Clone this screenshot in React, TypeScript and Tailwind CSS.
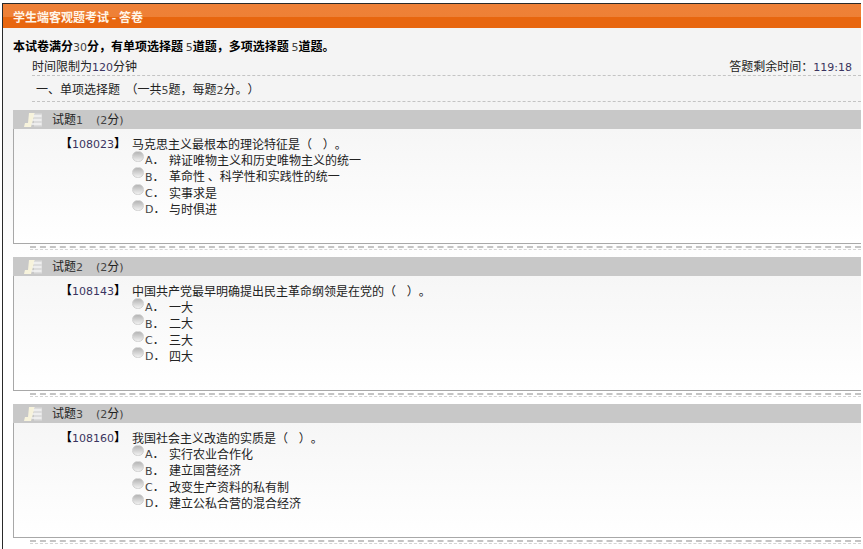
import { Fragment } from 'react'

const font = { fontFamily: '"Noto Sans CJK SC", sans-serif' }

const questions = [
  {
    no: 1,
    id: '108023',
    text: '马克思主义最根本的理论特征是（\u00a0\u00a0\u00a0\u00a0）。',
    options: ['辩证唯物主义和历史唯物主义的统一', '革命性 、科学性和实践性的统一', '实事求是', '与时俱进'],
  },
  {
    no: 2,
    id: '108143',
    text: '中国共产党最早明确提出民主革命纲领是在党的（\u00a0\u00a0\u00a0\u00a0）。',
    options: ['一大', '二大', '三大', '四大'],
  },
  {
    no: 3,
    id: '108160',
    text: '我国社会主义改造的实质是（\u00a0\u00a0\u00a0\u00a0）。',
    options: ['实行农业合作化', '建立国营经济', '改变生产资料的私有制', '建立公私合营的混合经济'],
  },
]

const letters = ['A', 'B', 'C', 'D']

function Num({ children, blue }: { children: React.ReactNode; blue?: boolean }) {
  return (
    <span className={`font-['DejaVu_Sans'] text-[11px] font-normal ${blue ? 'text-[#3b3460]' : 'text-[#444444]'}`}>
      {children}
    </span>
  )
}

function NoteIcon() {
  return (
    <svg width="20" height="16" viewBox="0 0 20 16" className="shrink-0">
      <path d="M6 1h6L8 15H1l1-4h3z" fill="#f7f3dc" />
      <rect x="11" y="1.500" width="8" height="13" fill="#dcdcdc" />
      <path d="M10.500 4h8M9.500 8h9M8.500 12h10" stroke="#f4f4f4" strokeWidth="1.500" />
    </svg>
  )
}

function Radio() {
  return <span className="mt-[-7px] h-[11px] w-[12px] shrink-0 rounded-full border border-[#d0d0d0] bg-gradient-to-b from-[#b4b4b4] to-[#f0f0f0]" />
}

function Question({ q }: { q: (typeof questions)[number] }) {
  return (
    <Fragment>
      <div className="flex h-[19px] items-center bg-[#c8c8c8] pl-[10px] text-[12px] text-[#222222]">
        <NoteIcon />
        <span className="ml-[9px] w-[44px]">
          试题<Num>{q.no}</Num>
        </span>
        <span>
          <Num>(2</Num>分<Num>)</Num>
        </span>
      </div>
      <div className="h-[115px] border-b border-l border-[#a8a8a8] bg-gradient-to-b from-[#f6f6f6] to-white pt-[7px] text-[12px] text-[#222222]">
        <div className="flex h-[16px] items-center">
          <span className="ml-[46px] w-[72px] font-bold text-black">
            【<Num blue>{q.id}</Num>】
          </span>
          <span>{q.text}</span>
        </div>
        {q.options.map((opt, i) => (
          <div key={opt} className="ml-[118px] flex h-[16.300px] items-center">
            <Radio />
            <span className="ml-px w-[24px]">
              <Num>{letters[i]}</Num>．
            </span>
            <span>{opt}</span>
          </div>
        ))}
      </div>
      <div className="ml-[17px] mt-[2px] border-t-2 border-dashed border-[#c4c4c4]" />
      <div className="ml-[17px] mb-[7px] mt-[1px] border-t border-dashed border-[#d4d4d4]" />
    </Fragment>
  )
}

export default function App() {
  return (
    <div style={font} className="h-[549px] w-[863px] overflow-hidden bg-white pl-[2px] pr-[2px] pt-[3px] [text-spacing-trim:space-all]">
      <div className="h-full border-l border-t border-[#2a2a2a] bg-[linear-gradient(#f4f4f4_0,#f4f4f4_22%,#ffffff_50%)]">
        <div className="h-[24px] bg-[linear-gradient(#ef8138_0,#ee8036_55%,#e8660f_55%,#e8660f_100%)] pl-[10px] text-[12px] font-bold leading-[26px] text-[#fff5e8]">
          学生端客观题考试 - 答卷
        </div>
        <div className="pl-[10px] pt-[10px] text-[12px] font-bold leading-[16px] text-black">
          本试卷满分<Num>30</Num>分，有单项选择题 <Num>5</Num>道题，多项选择题 <Num>5</Num>道题。
        </div>
        <div className="mt-[4px] flex h-[14px] items-center justify-between pl-[29px] pr-[9px] text-[12px] text-[#222222]">
          <span>
            时间限制为<Num blue>120</Num>分钟
          </span>
          <span>
            答题剩余时间：<Num blue>119:18</Num>
          </span>
        </div>
        <div className="ml-[29px] mt-[1px] border-t border-dashed border-[#c4c4c4]" />
        <div className="ml-[33px] h-[25px] text-[12px] leading-[25px] text-[#222222]">
          一、单项选择题 &nbsp;（一共<Num>5</Num>题，每题<Num>2</Num>分。）
        </div>
        <div className="ml-[29px] border-t border-dashed border-[#c4c4c4]" />
        <div className="ml-[10px] mt-[8px]">
          {questions.map((q) => (
            <Question key={q.id} q={q} />
          ))}
        </div>
      </div>
    </div>
  )
}
